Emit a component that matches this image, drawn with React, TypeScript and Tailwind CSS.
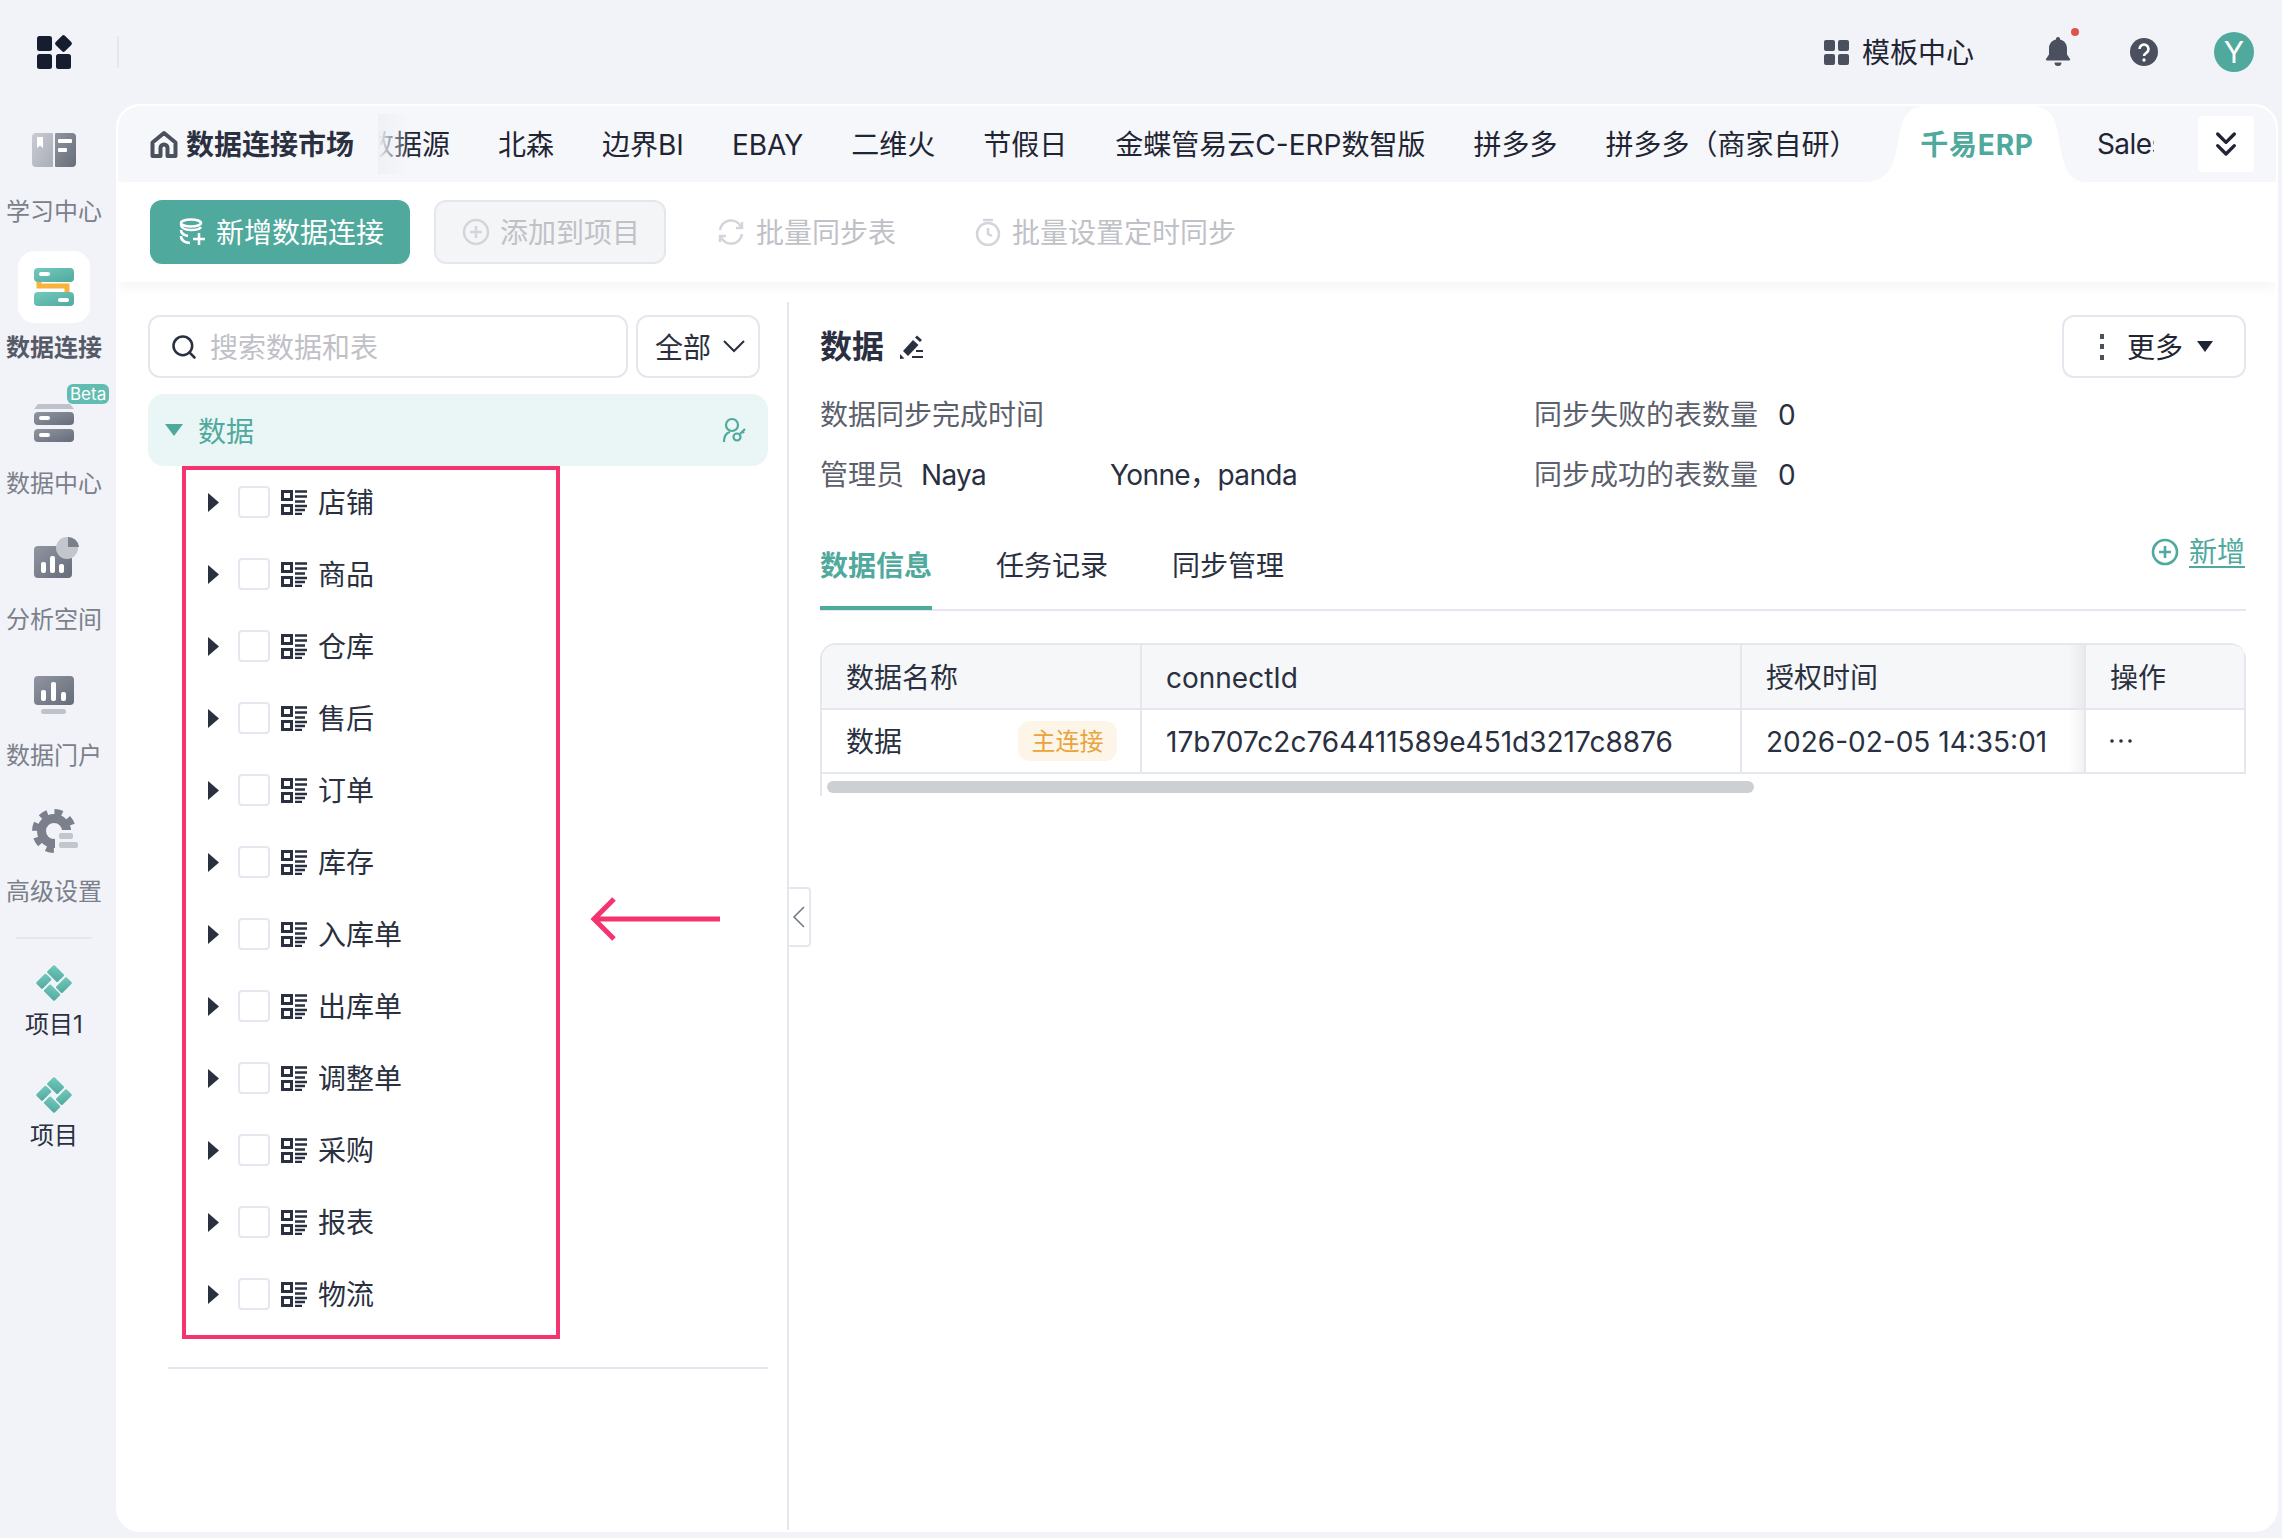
import React from 'react'
import { ChevronsDown, Search } from 'lucide-react'

const tabs = ['数据源', '北森', '边界BI', 'EBAY', '二维火', '节假日', '金蝶管易云C-ERP数智版', '拼多多', '拼多多（商家自研）']
const treeItems = ['店铺', '商品', '仓库', '售后', '订单', '库存', '入库单', '出库单', '调整单', '采购', '报表', '物流']

const Defs = () => (
    <svg width="0" height="0" className="absolute">
        <defs>
            <linearGradient id="greyDark" x1="0" y1="0" x2="1" y2="1">
                <stop offset="0" stopColor="#9095a1" />
                <stop offset="1" stopColor="#666c79" />
            </linearGradient>
            <linearGradient id="greyLight" x1="0" y1="0" x2="1" y2="1">
                <stop offset="0" stopColor="#c9ccd3" />
                <stop offset="1" stopColor="#a9adb7" />
            </linearGradient>
            <linearGradient id="tealGrad" x1="0" y1="0" x2="1" y2="1">
                <stop offset="0" stopColor="#72cabd" />
                <stop offset="1" stopColor="#4fa99c" />
            </linearGradient>
            <clipPath id="gearClip">
                <path d="M0 0h46v22H23v24H0z" />
            </clipPath>
        </defs>
    </svg>
)

const BookIcon = () => (
    <svg width="44" height="34" viewBox="0 0 44 34" className="-mt-[3px]">
        <path d="M4 0h16a1 1 0 0 1 1 1v33H4a4 4 0 0 1-4-4V4a4 4 0 0 1 4-4z" fill="url(#greyLight)" />
        <path d="M23 1a1 1 0 0 1 1-1h16a4 4 0 0 1 4 4v26a4 4 0 0 1-4 4H24a1 1 0 0 1-1-1z" fill="url(#greyDark)" />
        <path d="M5 4h6v11l-3-2.500L5 15z" fill="#fff" />
        <rect x="26" y="6" width="14" height="4" rx="1" fill="#fff" />
        <rect x="26" y="15" width="9" height="4" rx="1" fill="#fff" />
    </svg>
)

const ConnectIcon = () => (
    <svg width="42" height="38" viewBox="0 0 42 38">
        <path d="M6 12v6h28v6" fill="none" stroke="#f7b33c" strokeWidth="5" />
        <rect x="1" y="0" width="40" height="14" rx="4" fill="url(#tealGrad)" />
        <rect x="1" y="24" width="40" height="14" rx="4" fill="url(#tealGrad)" />
        <rect x="6" y="4" width="11" height="4" rx="2" fill="#fff" />
        <rect x="25" y="30" width="11" height="4" rx="2" fill="#fff" />
    </svg>
)

const ServerIcon = () => (
    <svg width="42" height="38" viewBox="0 0 42 38">
        <path d="M5 0h32l4 5H1z" fill="#bfc2ca" />
        <rect x="1" y="8" width="40" height="13" rx="4" fill="url(#greyDark)" />
        <rect x="1" y="25" width="40" height="13" rx="4" fill="url(#greyDark)" />
        <rect x="6" y="12" width="11" height="4" rx="2" fill="#fff" />
        <rect x="6" y="29" width="11" height="4" rx="2" fill="#fff" />
    </svg>
)

const AnalysisIcon = () => (
    <svg width="46" height="42" viewBox="0 0 46 42" className="-mt-[5px] ml-[3px]">
        <rect x="1" y="10" width="38" height="32" rx="4" fill="url(#greyDark)" />
        <circle cx="34" cy="12" r="11" fill="#c3c6cd" />
        <path d="M35 1a11 11 0 0 1 11 10H35z" fill="#7b808c" />
        <rect x="8" y="26" width="5" height="11" rx="2" fill="#fff" />
        <rect x="17" y="20" width="5" height="17" rx="2" fill="#fff" />
        <rect x="26" y="28" width="5" height="9" rx="2" fill="#fff" />
    </svg>
)

const PortalIcon = () => (
    <svg width="42" height="38" viewBox="0 0 42 38">
        <rect x="1" y="0" width="40" height="29" rx="4" fill="url(#greyDark)" />
        <rect x="8" y="14" width="5" height="11" rx="2" fill="#fff" />
        <rect x="18" y="6" width="5" height="19" rx="2" fill="#fff" />
        <rect x="28" y="16" width="5" height="9" rx="2" fill="#fff" />
        <rect x="8" y="33" width="25" height="5" rx="2.500" fill="#bfc2ca" />
    </svg>
)

const GearIcon = () => (
    <svg width="46" height="46" viewBox="0 0 46 46" className="ml-[2px]">
        <g clipPath="url(#gearClip)" fill="none" stroke="#7b808c">
            <circle cx="22" cy="23" r="12.500" strokeWidth="9" />
            <circle cx="22" cy="23" r="19" strokeWidth="6" strokeDasharray="7.900 7" />
        </g>
        <rect x="27" y="25" width="14" height="6" rx="2" fill="#c3c6cd" />
        <rect x="27" y="34" width="19" height="6" rx="2" fill="#c3c6cd" />
    </svg>
)

const ProjectIcon = () => (
    <svg width="36" height="36" viewBox="0 0 36 36">
        <g transform="rotate(45 18 18)" fill="url(#tealGrad)">
            <rect x="5" y="5" width="15" height="10.500" rx="1.500" />
            <rect x="22" y="5" width="9" height="15" rx="1.500" />
            <rect x="16" y="21.500" width="15" height="9.500" rx="1.500" />
            <rect x="5" y="17" width="9" height="14" rx="1.500" />
        </g>
    </svg>
)

const navItems = [
    { label: '学习中心', icon: <BookIcon /> },
    { label: '数据连接', icon: <ConnectIcon />, active: true },
    { label: '数据中心', icon: <ServerIcon />, beta: true },
    { label: '分析空间', icon: <AnalysisIcon /> },
    { label: '数据门户', icon: <PortalIcon /> },
    { label: '高级设置', icon: <GearIcon /> },
]

const QrList = () => (
    <svg width="26" height="25" viewBox="0 0 26 25" className="shrink-0 text-[#2a3040]">
        <path d="M1.500 1.500h9v8h-9zM1.500 15.500h9v8h-9z" fill="none" stroke="currentColor" strokeWidth="3" />
        <path d="M14 1.500h12M14 6.500h12M14 11.500h10M14 16h12M14 20h10M14 24h7" stroke="currentColor" strokeWidth="2.500" />
    </svg>
)

const Rail = () => (
    <div className="w-[116px] shrink-0 pt-[11px] pr-[8px] flex flex-col items-center">
        {navItems.map((item) => (
            <div key={item.label} className="relative h-[136px] w-full flex flex-col items-center">
                <div className={`w-[72px] h-[72px] flex items-center justify-center rounded-2xl ${item.active ? 'bg-white' : ''}`}>
                    {item.icon}
                </div>
                {item.beta && (
                    <span className="absolute left-[67px] -top-[3px] bg-[#62bdb1] text-white text-[17px] leading-[20px] px-[3px] rounded-md">Beta</span>
                )}
                <span className={`mt-[8px] text-2xl leading-[34px] whitespace-nowrap ${item.active ? 'font-semibold text-[#555a66]' : 'text-[#7b808b]'}`}>
                    {item.label}
                </span>
            </div>
        ))}
        <div className="w-[76px] h-[2px] bg-[#e6e7ee] mt-[6px]" />
        <div className="mt-[26px] flex flex-col items-center">
            <ProjectIcon />
            <span className="mt-[7px] text-2xl leading-[34px] text-[#2a3040]">项目1</span>
        </div>
        <div className="mt-[35px] flex flex-col items-center">
            <ProjectIcon />
            <span className="mt-[6px] text-2xl leading-[34px] text-[#2a3040]">项目</span>
        </div>
    </div>
)

const TopBar = () => (
    <div className="h-[104px] flex items-center pl-[37px] pr-[28px] text-[#1f2533]">
        <svg width="36" height="36" viewBox="0 0 36 36" className="text-[#161d2e]">
            <rect x="0" y="2" width="15" height="15" rx="2.500" fill="currentColor" />
            <rect x="0" y="20" width="15" height="15" rx="2.500" fill="currentColor" />
            <rect x="19" y="20" width="15" height="15" rx="2.500" fill="currentColor" />
            <rect x="20" y="3" width="13" height="13" rx="2" fill="currentColor" transform="rotate(45 26.500 9.500)" />
        </svg>
        <div className="ml-[44px] w-[2px] h-[32px] bg-[#e6e7ee]" />
        <div className="ml-auto flex items-center">
            <svg width="25" height="25" viewBox="0 0 25 25" className="text-[#4a505e]">
                <rect x="0" y="0" width="11" height="11" rx="2" fill="currentColor" />
                <rect x="14" y="0" width="11" height="11" rx="2" fill="currentColor" />
                <rect x="0" y="14" width="11" height="11" rx="2" fill="currentColor" />
                <rect x="14" y="14" width="11" height="11" rx="2" fill="currentColor" />
            </svg>
            <span className="ml-[13px] pt-[2px] text-[28px] leading-10">模板中心</span>
            <div className="relative ml-[71px] w-[26px] h-[30px]">
                <svg width="26" height="30" viewBox="0 0 26 30" className="text-[#4a505e]">
                    <path d="M13 0a2 2 0 0 1 2 2.500c4.500 1 7 4.500 7 9v6l3 4.500a1 1 0 0 1-1 1.500H2a1 1 0 0 1-1-1.500L4 17.500v-6c0-4.500 2.500-8 7-9A2 2 0 0 1 13 0zM9.500 25.500h7a3.500 3.500 0 0 1-7 0z" fill="currentColor" />
                </svg>
                <span className="absolute -top-[9px] left-[26px] w-2 h-2 rounded-full bg-[#e0524f]" />
            </div>
            <svg width="28" height="28" viewBox="0 0 28 28" className="ml-[59px] text-[#4a505e]">
                <circle cx="14" cy="14" r="14" fill="currentColor" />
                <path d="M9.500 11a4.500 4.500 0 1 1 6.800 3.900c-1.500.9-2.300 1.600-2.300 3.100" fill="none" stroke="#fff" strokeWidth="2.600" />
                <circle cx="14" cy="22" r="1.700" fill="#fff" />
            </svg>
            <div className="ml-[56px] w-10 h-10 rounded-full bg-[#4fa99c] text-white text-[30px] flex items-center justify-center">Y</div>
        </div>
    </div>
)

const TabBar = () => (
    <div className="h-[76px] bg-[#f6f7fb] rounded-t-[22px] flex items-center text-[#1f2533] relative">
        <div className="pl-[32px] flex items-center w-[260px] shrink-0">
            <svg width="28" height="28" viewBox="0 0 28 28" className="text-[#4a505e]">
                <path d="M14 3L2.500 12.500V26h8v-8a3.500 3.500 0 0 1 7 0v8h8V12.500z" fill="none" stroke="currentColor" strokeWidth="4" strokeLinejoin="round" />
            </svg>
            <span className="ml-2 pt-[2px] text-[28px] font-bold whitespace-nowrap text-[#2a3040]">数据连接市场</span>
        </div>
        <div className="relative flex-1 min-w-0 overflow-hidden h-full flex items-center">
            <div className="-ml-[12px] pt-[2px] flex gap-12 text-[28px] whitespace-nowrap">
                {tabs.map((tab) => (
                    <span key={tab}>{tab}</span>
                ))}
            </div>
            <div className="absolute left-0 top-[8px] bottom-[8px] w-[32px] bg-linear-to-r from-[#f0f1f5] to-transparent" />
        </div>
        <div className="relative w-[224px] h-full shrink-0 flex items-center justify-center -ml-[4px]">
            <svg width="224" height="76" viewBox="0 0 224 76" className="absolute inset-0">
                <path d="M0 76C20 76 28 66 32 50L38 22C42 6 50 0 64 0H168C182 0 190 6 194 22L199 50C203 66 209 76 224 76Z" fill="#fff" />
            </svg>
            <span className="relative ml-[4px] pt-[2px] text-[28px] font-bold text-[#4fa99c] whitespace-nowrap tracking-[0.8px]">千易ERP</span>
        </div>
        <div className="w-[57px] overflow-hidden text-[28px] ml-[10px] tracking-[-0.6px] shrink-0">Sales</div>
        <div className="ml-[44px] mr-[22px] w-[56px] h-[56px] bg-white flex items-center justify-center rounded shrink-0">
            <ChevronsDown size={40} strokeWidth={2} className="text-[#1f2533]" />
        </div>
    </div>
)

const Toolbar = () => (
    <div className="relative z-10 h-[100px] bg-white shadow-[0_6px_12px_rgba(0,0,0,0.04)] pl-8 flex items-center text-[28px]">
        <button className="w-[260px] h-[64px] rounded-xl bg-[#4fa99c] text-white flex items-center pl-[28px]">
            <svg width="28" height="28" viewBox="0 0 28 28" fill="none" stroke="#fff" strokeWidth="2.600">
                <ellipse cx="13" cy="5" rx="10" ry="3.500" />
                <path d="M3 6c0 4 3 6 10 6s9-1 10-3M3 12c0 4 3 5 7 6M3 18c0 5 5 7 9 7" />
                <path d="M21 15v12M15 21h12" />
            </svg>
            <span className="ml-[10px] pt-[2px]">新增数据连接</span>
        </button>
        <button className="ml-6 w-[232px] h-[64px] rounded-xl bg-[#f4f5f7] border-2 border-[#e6e7ee] text-[#bfc1c7] flex items-center pl-[26px]">
            <svg width="28" height="28" viewBox="0 0 28 28" fill="none" stroke="#d3d5da" strokeWidth="2.500">
                <circle cx="14" cy="14" r="12" />
                <path d="M14 8v12M8 14h12" />
            </svg>
            <span className="ml-[10px] pt-[2px]">添加到项目</span>
        </button>
        <div className="ml-[51px] flex items-center text-[#bfc1c7]">
            <svg width="28" height="28" viewBox="0 0 28 28" fill="none" stroke="#d3d5da" strokeWidth="2.500">
                <path d="M3 12A11 11 0 0 1 24 9M25 16A11 11 0 0 1 4 19" />
                <path d="M25 4v6h-6M3 24v-6h6" />
            </svg>
            <span className="ml-[11px] pt-[2px]">批量同步表</span>
        </div>
        <div className="ml-[79px] flex items-center text-[#bfc1c7]">
            <svg width="26" height="28" viewBox="0 0 26 28" fill="none" stroke="#d3d5da" strokeWidth="2.500">
                <circle cx="13" cy="16" r="11" />
                <path d="M13 10v6l4 2M8 2h10" />
            </svg>
            <span className="ml-[11px] pt-[2px]">批量设置定时同步</span>
        </div>
    </div>
)

const LeftPanel = () => (
    <div className="relative w-[671px] shrink-0 border-r-2 border-[#e6e7ee] pl-[30px] pr-[19px] pt-[13px] text-[28px]">
        <div className="flex gap-2">
            <div className="w-[480px] h-[63px] rounded-xl border-2 border-[#e6e7ee] flex items-center pl-[20px] text-[#bfc1c7]">
                <Search size={28} strokeWidth={2.2} className="text-[#2a3040]" />
                <span className="ml-[12px] pt-[2px]">搜索数据和表</span>
            </div>
            <div className="w-[124px] h-[63px] rounded-xl border-2 border-[#e6e7ee] flex items-center pl-[17px] text-[#2a3040]">
                <span className="pt-[2px]">全部</span>
                <svg width="22" height="13" viewBox="0 0 22 13" fill="none" stroke="currentColor" strokeWidth="2" className="ml-[12px]">
                    <path d="M1 1l10 10L21 1" />
                </svg>
            </div>
        </div>
        <div className="mt-4 h-[72px] rounded-2xl bg-[#e9f6f5] flex items-center pl-[17px] pr-[22px] text-[#4fa99c]">
            <svg width="18" height="12" viewBox="0 0 18 12">
                <path d="M0 0h18l-9 12z" fill="currentColor" />
            </svg>
            <span className="ml-[15px] pt-[3px]">数据</span>
            <svg width="24" height="26" viewBox="0 0 24 26" fill="none" stroke="currentColor" strokeWidth="2.200" className="ml-auto">
                <circle cx="10" cy="8" r="6" />
                <path d="M2 25c0-6 2-9 6-10" />
                <circle cx="15" cy="20" r="3.500" />
                <path d="M18 17l5-5M20 14l2 2" />
            </svg>
        </div>
        <div className="ml-[34px] w-[378px] h-[873px] border-4 border-[#f5336f]">
            <div className="-mt-1">
                {treeItems.map((item) => (
                    <div key={item} className="h-[72px] flex items-center pl-[22px] text-[#2a3040]">
                        <svg width="11" height="19" viewBox="0 0 11 19" className="shrink-0">
                            <path d="M0 0l11 9.500L0 19z" fill="currentColor" />
                        </svg>
                        <span className="ml-[19px] w-8 h-8 rounded border-2 border-[#e6e7ee] shrink-0" />
                        <span className="ml-[11px]"><QrList /></span>
                        <span className="ml-[11px] pt-[2px]">{item}</span>
                    </div>
                ))}
            </div>
        </div>
        <div className="mt-[28px] ml-[20px] h-[2px] bg-[#e6e7ee]" />
        <svg width="132" height="46" viewBox="0 0 132 46" className="absolute left-[472px] top-[594px]">
            <path d="M130 23H4M24 3L4 23l20 20" fill="none" stroke="#f5336f" strokeWidth="5" />
        </svg>
        <div className="absolute -right-[24px] top-[585px] w-[22px] h-[60px] border-2 border-l-0 border-[#e6e7ee] rounded-r bg-white flex items-center justify-center">
            <svg width="12" height="22" viewBox="0 0 12 22" fill="none" stroke="#6b7280" strokeWidth="1.500" className="shrink-0">
                <path d="M11 1L1 11l10 10" />
            </svg>
        </div>
    </div>
)

const RightPanel = () => (
    <div className="ml-[31px] w-[1426px] pt-[13px] text-[28px] text-[#2a3040]">
        <div className="h-[63px] flex items-center">
            <span className="text-[32px] font-semibold text-[#2a3040]">数据</span>
            <svg width="26" height="26" viewBox="0 0 26 26" className="ml-[15px] text-[#2a3040]">
                <path d="M4 17L14 6l5.500 5L9 22zM16 3.500L18 1.500l5 4.500-2 2zM1 25v-5l4.500 4.500z" fill="currentColor" />
                <path d="M17 17h7M13 23h11" stroke="currentColor" strokeWidth="2.200" />
            </svg>
            <div className="ml-auto w-[184px] h-[63px] rounded-xl border-2 border-[#e6e7ee] flex items-center pl-[36px] text-[#1f2533]">
                <svg width="4" height="26" viewBox="0 0 4 26" className="text-[#4a505e]">
                    <rect width="4" height="5" fill="currentColor" />
                    <rect y="10" width="4" height="5" fill="currentColor" />
                    <rect y="21" width="4" height="5" fill="currentColor" />
                </svg>
                <span className="ml-[23px] pt-[2px]">更多</span>
                <svg width="16" height="11" viewBox="0 0 16 11" className="ml-[14px]">
                    <path d="M0 0h16l-8 11z" fill="currentColor" />
                </svg>
            </div>
        </div>
        <div className="mt-[17px] h-10 flex items-center">
            <span className="w-[714px] text-[#5b606c]">数据同步完成时间</span>
            <span className="text-[#5b606c]">同步失败的表数量</span>
            <span className="ml-5">0</span>
        </div>
        <div className="mt-[19px] h-10 flex items-center pt-[2px]">
            <span className="text-[#5b606c]">管理员</span>
            <span className="ml-[17px] w-[189px] tracking-[-0.7px]">Naya</span>
            <span className="w-[424px] tracking-[-0.6px]">Yonne，panda</span>
            <span className="text-[#5b606c]">同步成功的表数量</span>
            <span className="ml-5">0</span>
        </div>
        <div className="mt-9 h-[81px] flex gap-[64px] border-b-2 border-[#e6e7ee]">
            <div className="h-[80px] pt-[16px] leading-10 font-bold text-[#4fa99c] border-b-4 border-[#4fa99c] box-border">数据信息</div>
            <div className="pt-[16px] leading-10">任务记录</div>
            <div className="pt-[16px] leading-10">同步管理</div>
            <div className="ml-auto flex items-start text-[#4fa99c] pr-px">
                <svg width="28" height="28" viewBox="0 0 28 28" fill="none" stroke="currentColor" strokeWidth="2.600" className="mt-[8px]">
                    <circle cx="14" cy="14" r="12" />
                    <path d="M14 8v12M8 14h12" />
                </svg>
                <span className="ml-[10px] leading-10 underline underline-offset-4 mt-[2px]">新增</span>
            </div>
        </div>
        <div className="mt-8 rounded-t-2xl border-l-2 border-t-2 border-[#e6e7ee] overflow-hidden">
            <div className="grid grid-cols-[320px_600px_342px_1fr] h-[65px] bg-[#f6f7f9] border-b-2 border-r-2 border-[#e6e7ee] items-stretch">
                <div className="pl-[24px] pt-[2px] flex items-center border-r-2 border-[#e6e7ee]">数据名称</div>
                <div className="pl-[24px] pt-[2px] flex items-center border-r-2 border-[#e6e7ee]">connectId</div>
                <div className="pl-[24px] pt-[2px] flex items-center">授权时间</div>
                <div className="relative pl-[24px] pt-[2px] flex items-center border-l-2 border-[#e6e7ee]">
                    <div className="absolute -left-[18px] top-0 bottom-0 w-4 bg-linear-to-l from-black/5 to-transparent" />
                    操作
                </div>
            </div>
            <div className="grid grid-cols-[320px_600px_342px_1fr] h-[64px] border-b-2 border-r-2 border-[#e6e7ee] items-stretch">
                <div className="pl-[24px] pr-[23px] flex items-center justify-between border-r-2 border-[#e6e7ee]">
                    <span className="pt-[2px]">数据</span>
                    <span className="w-[99px] h-10 rounded-xl bg-[#fdf5e8] text-[#e8a43d] text-2xl flex items-center justify-center pt-[2px]">主连接</span>
                </div>
                <div className="pl-[24px] pt-[2px] flex items-center border-r-2 border-[#e6e7ee] whitespace-nowrap">17b707c2c764411589e451d3217c8876</div>
                <div className="pl-[24px] pt-[2px] flex items-center whitespace-nowrap">2026-02-05 14:35:01</div>
                <div className="relative pl-[24px] flex items-center border-l-2 border-[#e6e7ee]">
                    <div className="absolute -left-[18px] top-0 bottom-0 w-4 bg-linear-to-l from-black/5 to-transparent" />
                    <svg width="24" height="4" viewBox="0 0 24 4" className="text-[#2a3040]">
                        <circle cx="2" cy="2" r="1.800" fill="currentColor" />
                        <circle cx="11" cy="2" r="1.800" fill="currentColor" />
                        <circle cx="20" cy="2" r="1.800" fill="currentColor" />
                    </svg>
                </div>
            </div>
            <div className="h-[22px] pt-[7px] pl-[5px]">
                <div className="w-[927px] h-3 rounded-md bg-[#cdd0d3]" />
            </div>
        </div>
    </div>
)

export default function App() {
    return (
        <div className="w-[2282px] h-[1538px] overflow-hidden bg-[#f1f3f8] font-[Inter,'Noto_Sans_CJK_SC',sans-serif] flex flex-col">
            <Defs />
            <TopBar />
            <div className="flex flex-1 min-h-0">
                <Rail />
                <div className="w-[2162px] h-[1428px] bg-white border-2 border-white rounded-[24px] flex flex-col overflow-hidden">
                    <TabBar />
                    <Toolbar />
                    <div className="flex flex-1 min-h-0 mt-5">
                        <LeftPanel />
                        <RightPanel />
                    </div>
                </div>
            </div>
        </div>
    )
}
